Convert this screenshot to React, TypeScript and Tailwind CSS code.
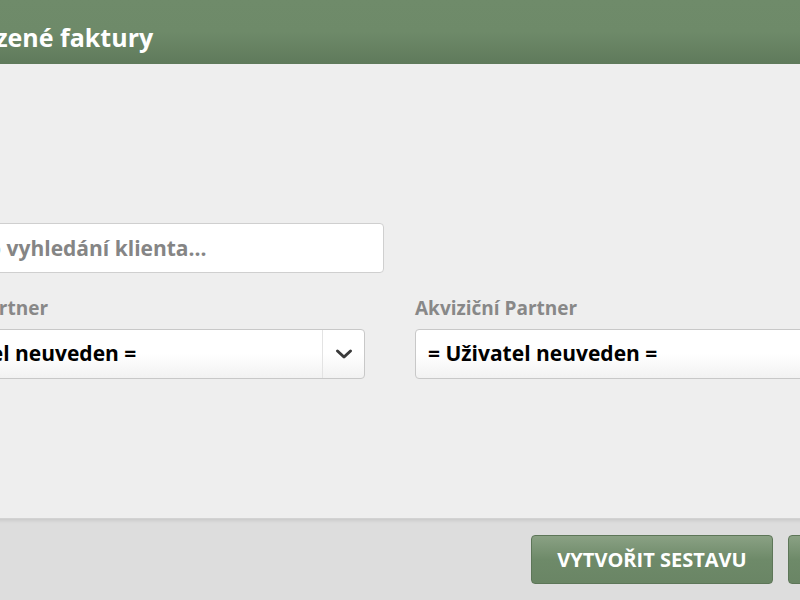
function Chevron() {
  return (
    <svg width="18" height="12" viewBox="0 0 18 12" fill="none">
      <path d="M2.5 3 L9 9 L15.5 3" stroke="#3a3a3a" strokeWidth="3" strokeLinecap="round" strokeLinejoin="round" />
    </svg>
  );
}

function SelectBox({ label }: { label: string }) {
  return (
    <div>
      <label className="block text-[19px] font-bold text-[#888] leading-none mb-[11px]">
        {label}
      </label>
      <div className="h-[50px] flex items-stretch rounded-[4px] border border-[#c8c8c8] bg-gradient-to-b from-white via-white to-[#f2f2f2]">
        <span className="flex-1 flex items-center px-3 text-[21px] font-bold text-black">
          = Uživatel neuveden =
        </span>
        <span className="w-[42px] flex items-center justify-center border-l border-[#e3e3e3]">
          <Chevron />
        </span>
      </div>
    </div>
  );
}

export default function App() {
  return (
    <div className="w-[800px] h-[600px] overflow-hidden bg-[#eeeeee] font-['Open_Sans',sans-serif]">
      {/* dialog is wider than the viewport, shifted left like the screenshot */}
      <div className="-ml-[129px] w-[1070px] h-[600px] flex flex-col">
        {/* Header */}
        <div className="h-16 shrink-0 flex items-center px-[30px] bg-gradient-to-b from-[#6f8b6a] via-[#6e8a69] to-[#5f7a5b]">
          <h1 className="text-[25px] font-bold text-white leading-none pt-[11px]">
            Neuhrazené faktury
          </h1>
        </div>

        {/* Body */}
        <div className="flex-1 px-[23px] pt-[159px]">
          <input
            type="text"
            placeholder="Text pro vyhledání klienta..."
            className="ml-[7px] w-[483px] h-[50px] rounded-[4px] border border-[#cfcfcf] bg-white px-3 text-[21px] font-bold text-[#333] placeholder:text-[#858585] outline-none"
          />

          <div className="grid grid-cols-[471px_471px] gap-[50px] mt-[26px]">
            <SelectBox label="Smluvní Partner" />
            <SelectBox label="Akviziční Partner" />
          </div>
        </div>

        {/* Footer */}
        <div className="h-[82px] shrink-0 flex items-center justify-end gap-[15px] pr-[30px] bg-[#dddddd] border-t border-[#d2d2d2] shadow-[inset_0_3px_4px_-2px_rgba(0,0,0,0.12)]">
          <button className="h-[49px] w-[242px] rounded-[4px] border border-[#5d7658] bg-gradient-to-b from-[#8aa184] via-[#6e8a69] to-[#6a8565] text-white text-[20px] font-bold">
            VYTVOŘIT SESTAVU
          </button>
          <button className="h-[49px] w-[123px] rounded-[4px] border border-[#5d7658] bg-gradient-to-b from-[#8aa184] via-[#6e8a69] to-[#6a8565] text-white text-[20px] font-bold">
            ZAVŘÍT
          </button>
        </div>
      </div>
    </div>
  );
}
